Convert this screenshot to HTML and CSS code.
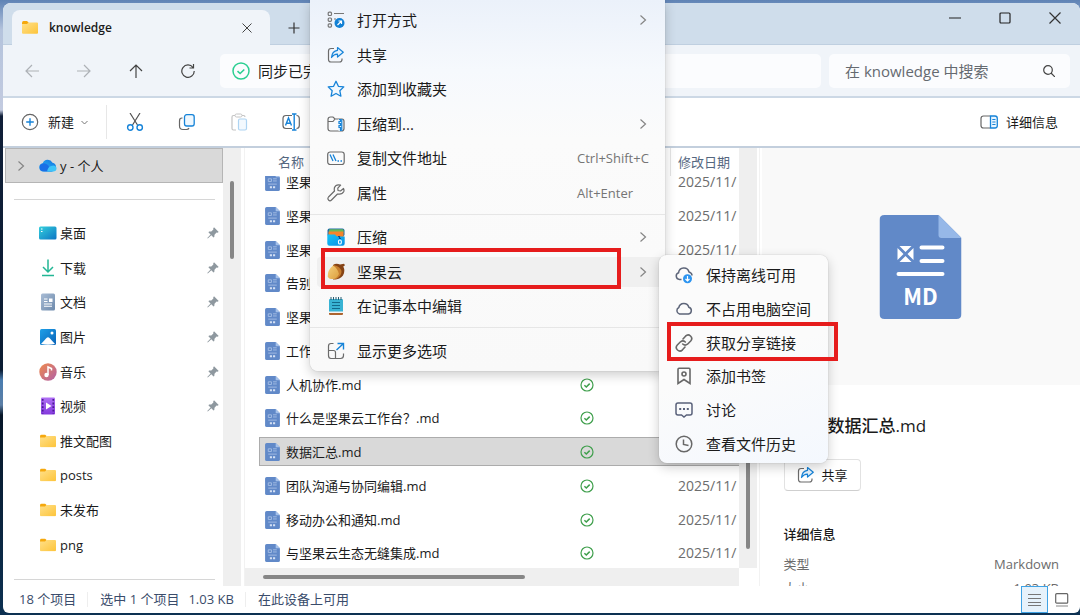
FILE: index.html
```html
<!DOCTYPE html>
<html lang="zh-CN">
<head>
<meta charset="utf-8">
<meta name="viewport" content="width=device-width, initial-scale=1">
<title>knowledge</title>
<link rel="stylesheet" href="styles.css">
</head>
<body>
<svg class="defs" aria-hidden="true">
  <defs>
    <linearGradient id="g-folder" x1="0" y1="0" x2="1" y2="1"><stop offset="0" stop-color="#ffe08a"/><stop offset="1" stop-color="#fdc43a"/></linearGradient>
    <linearGradient id="g-desk" x1="0" y1="0" x2="1" y2="1"><stop offset="0" stop-color="#35d0dc"/><stop offset="1" stop-color="#0b74c4"/></linearGradient>
    <linearGradient id="g-doc" x1="0" y1="0" x2="1" y2="1"><stop offset="0" stop-color="#a9bdd6"/><stop offset="1" stop-color="#6d89ab"/></linearGradient>
    <linearGradient id="g-pic" x1="0" y1="0" x2="1" y2="1"><stop offset="0" stop-color="#1ea0e8"/><stop offset="1" stop-color="#0a63b8"/></linearGradient>
    <linearGradient id="g-music" x1="0" y1="0" x2="1" y2="1"><stop offset="0" stop-color="#f08a4b"/><stop offset="1" stop-color="#b160a8"/></linearGradient>
    <linearGradient id="g-video" x1="0" y1="0" x2="0" y2="1"><stop offset="0" stop-color="#b070f5"/><stop offset="1" stop-color="#8339dd"/></linearGradient>
    <linearGradient id="g-cloud" x1="0" y1="1" x2="1" y2="0"><stop offset="0" stop-color="#35c3f7"/><stop offset="1" stop-color="#0f6fe0"/></linearGradient>
    <linearGradient id="g-zip" x1="0" y1="0" x2="1" y2="1"><stop offset="0" stop-color="#12c3f5"/><stop offset="1" stop-color="#0a8fe6"/></linearGradient>
    <linearGradient id="g-nut" x1="0" y1="0" x2="1" y2="1"><stop offset="0" stop-color="#f6d07c"/><stop offset="1" stop-color="#dc9f3e"/></linearGradient>
  </defs>
  <symbol id="folder" viewBox="0 0 16 13"><path d="M0 2Q0 0 1.500 0H5L6.500 1.500V4H0Z" fill="#f5a80d"/><path d="M0 3H5L6.500 1.500H15Q16 1.500 16 2.500V11.500Q16 12.700 15 12.700H1Q0 12.700 0 11.500Z" fill="url(#g-folder)"/></symbol>
  <symbol id="pin" viewBox="0 0 12 12"><path d="M7 .3 11.700 5 10.500 5.700 9.500 5.500 7.500 7.800 7.300 10 6.500 10.500 4.300 8.300.8 11.600.3 11.100 3.600 7.600 1.500 5.400 2 4.600 4.300 4.400 6.400 2.500 6.200 1.400Z" fill="#8e989f"/></symbol>
  <symbol id="md" viewBox="0 0 82 104"><path d="M5 0H59L82 23V99Q82 104 77 104H5Q0 104 0 99V5Q0 0 5 0Z" fill="#6189c8"/><path d="M59 0 82 23H62Q59 23 59 20Z" fill="#96b8e8"/><path d="M20 31H32L26 37ZM20 47H32L26 41ZM18 33V45L24 39ZM34 33V45L28 39Z" fill="#fff"/><path d="M42 32.500H63M42 46H63M19 59H63" stroke="#fff" stroke-width="4" stroke-linecap="round"/><text x="41" y="90" text-anchor="middle" class="md-word">MD</text></symbol>
  <symbol id="md-small" viewBox="0 0 14 17"><path d="M1.500 0H10L14 4V15.500Q14 17 12.500 17H1.500Q0 17 0 15.500V1.500Q0 0 1.500 0Z" fill="#6189c8"/><path d="M10 0 14 4H10Z" fill="#a6c2ea"/><path d="M3 5.500H6V8H3ZM7.500 5.500H11M7.500 7.500H11M3 10.500H11" stroke="#a3bde4" stroke-width=".9" fill="none"/><path d="M4.500 12.500H6.500V14.500H4.500ZM7.500 12.500H9.500V14.500H7.500Z" fill="#d5e1f4"/></symbol>
  <symbol id="ok" viewBox="0 0 14 14"><g fill="none" stroke="#3f9f4c" stroke-width="1.200"><circle cx="7" cy="7" r="6"/><path d="m4.400 7.200 1.900 1.800 3.400-3.400" stroke-width="1.500"/></g></symbol>
  <symbol id="chev" viewBox="0 0 8 12"><path d="m1.500 1.500 5 4.500-5 4.500" fill="none" stroke="#858585" stroke-width="1.200"/></symbol>
  <symbol id="share" viewBox="0 0 18 18"><path d="M7 2.500H4Q1.500 2.500 1.500 5V13.500Q1.500 16 4 16H12.500Q15 16 15 13.500V12.500" fill="none" stroke="#6b6b6b" stroke-width="1.200"/><path d="M10.500 1.500 16.300 6.200 10.500 11V8.200Q7 8 4.500 11.500 5 5 10.500 4.300Z" fill="#e6f3fd" stroke="#1683d8" stroke-width="1.200" stroke-linejoin="round"/></symbol>
</svg>

<div class="window">
  <header class="titlebar">
    <div class="tab">
      <svg class="i16" viewBox="0 0 16 13"><use href="#folder"/></svg>
      <span class="tab-name">knowledge</span>
      <button class="plain" aria-label="关闭标签页"><svg width="12" height="12" viewBox="0 0 12 12"><path d="m1.500 1.500 9 9M10.500 1.500l-9 9" stroke="#444"/></svg></button>
    </div>
    <button class="plain new-tab" aria-label="新标签页"><svg width="12" height="12" viewBox="0 0 12 12"><path d="M6 .5V11.500M.5 6H11.500" stroke="#333" stroke-width="1.200"/></svg></button>
    <div class="caption">
      <button class="plain" aria-label="最小化"><svg width="12" height="12" viewBox="0 0 12 12"><path d="M0 6H12" stroke="#222" stroke-width="1.200"/></svg></button>
      <button class="plain" aria-label="最大化"><svg width="12" height="12" viewBox="0 0 12 12"><rect x="1" y="1" width="10" height="10" rx="1" fill="none" stroke="#222" stroke-width="1.200"/></svg></button>
      <button class="plain" aria-label="关闭"><svg width="12" height="12" viewBox="0 0 12 12"><path d="m.5.5 11 11M11.500.5l-11 11" stroke="#333" stroke-width="1.200"/></svg></button>
    </div>
  </header>

  <nav class="navbar">
    <button class="plain" aria-label="后退"><svg width="14" height="14" viewBox="0 0 14 14"><path d="M14 7H1M7 1 1 7l6 6" fill="none" stroke="#adb1b6" stroke-width="1.200"/></svg></button>
    <button class="plain" aria-label="前进"><svg width="14" height="14" viewBox="0 0 14 14"><path d="M0 7H13M7 1l6 6-6 6" fill="none" stroke="#adb1b6" stroke-width="1.200"/></svg></button>
    <button class="plain" aria-label="向上"><svg width="14" height="14" viewBox="0 0 14 14"><path d="M7 14V1M1 7 7 1l6 6" fill="none" stroke="#444" stroke-width="1.200"/></svg></button>
    <button class="plain" aria-label="刷新"><svg width="14" height="14" viewBox="0 0 14 14"><path d="M12 3.500A6.200 6.200 0 1 0 13.200 7M12.500 0V4H8.500" fill="none" stroke="#444" stroke-width="1.200"/></svg></button>
    <div class="address">
      <svg width="18" height="18" viewBox="0 0 18 18"><g fill="none" stroke="#2bcf92"><circle cx="9" cy="9" r="8" stroke-width="1.500"/><path d="m5.500 9.200 2.600 2.300 4.200-4" stroke-width="1.600"/></g></svg>
      <span>同步已完成</span>
    </div>
    <label class="search">
      <input type="text" placeholder="在 knowledge 中搜索" aria-label="在 knowledge 中搜索">
      <svg width="12" height="12" viewBox="0 0 12 12"><g fill="none" stroke="#444" stroke-width="1.200"><circle cx="5" cy="5" r="4.300"/><path d="m8 8 4 4"/></g></svg>
    </label>
  </nav>

  <div class="toolbar">
    <button class="plain new">
      <svg width="18" height="18" viewBox="0 0 18 18"><circle cx="9" cy="9" r="7.700" fill="none" stroke="#666" stroke-width="1.200"/><path d="M9 5.200v7.600M5.200 9h7.600" stroke="#1683d8" stroke-width="1.400"/></svg>
      <span>新建</span>
      <svg width="7" height="5" viewBox="0 0 7 5"><path d="m.5 1 3 3 3-3" fill="none" stroke="#777"/></svg>
    </button>
    <span class="bar-line"></span>
    <button class="plain tool" aria-label="剪切"><svg width="18" height="18" viewBox="0 0 18 18"><path d="m4 0 7.500 12M14 0 6.500 12" stroke="#555" stroke-width="1.200"/><g fill="none" stroke="#1683d8" stroke-width="1.400"><circle cx="4.300" cy="14.500" r="2.700"/><circle cx="13.700" cy="14.500" r="2.700"/></g></svg></button>
    <button class="plain tool" aria-label="复制"><svg width="18" height="18" viewBox="0 0 18 18"><path d="M4.500 5H4Q1.500 5 1.500 8V13Q1.500 16.500 5 16.500H8.500Q10.500 16.500 11 15" fill="none" stroke="#666" stroke-width="1.200"/><rect x="6.500" y="1.700" width="9.700" height="11.300" rx="2.200" fill="#eef7fe" stroke="#1683d8" stroke-width="1.300"/></svg></button>
    <button class="plain tool" aria-label="粘贴"><svg width="18" height="18" viewBox="0 0 18 18"><path d="M6 17H3.500Q2 17 2 15.500V4Q2 2.500 3.500 2.500H5M12 2.500h1.500Q15 2.500 15 4" fill="none" stroke="#c4c4c4" stroke-width="1.200"/><rect x="5" y="1" width="7" height="3" rx="1.500" fill="#fff" stroke="#c4c4c4"/><rect x="8.500" y="6" width="8" height="11" rx="1.500" fill="#f3f9fe" stroke="#aed4f2" stroke-width="1.200"/></svg></button>
    <button class="plain tool" aria-label="重命名"><svg width="18" height="18" viewBox="0 0 18 18"><path d="M10 2.500H4Q1 2.500 1 5.500V12.500Q1 15.500 4 15.500H10M14.500 2.500Q17.300 2.500 17.300 5.500V12.500Q17.300 15.500 14.500 15.500" fill="none" stroke="#666" stroke-width="1.200"/><path d="M10 1h4.500M10 17h4.500M12.200 1V17" stroke="#1683d8" stroke-width="1.400"/><path d="M3.500 12.500 6.500 5l3 7.500M4.500 10.200h4" fill="none" stroke="#1683d8" stroke-width="1.400"/></svg></button>
    <button class="plain details-toggle">
      <svg width="18" height="14" viewBox="0 0 18 14"><path d="M10 1H3.500Q1 1 1 3.500V10.500Q1 13 3.500 13H10" fill="none" stroke="#666" stroke-width="1.200"/><path d="M10.500 1H15Q17.300 1 17.300 3.500V10.500Q17.300 13 15 13H10.500Z" fill="#e9f5fe" stroke="#1683d8" stroke-width="1.300"/><path d="M12.300 4.500h3.200M12.300 7h3.200M12.300 9.500h3.200" stroke="#1683d8"/></svg>
      <span>详细信息</span>
    </button>
  </div>

  <main class="content">
    <aside class="sidebar">
      <a class="account" href="#">
        <svg width="8" height="12" viewBox="0 0 8 12"><use href="#chev"/></svg>
        <svg class="cloud" width="18" height="13" viewBox="0 0 18 13"><path d="M4.500 12.500A4.200 4.200 0 0 1 3.700 4.200 5.400 5.400 0 0 1 13.500 3.700 4.500 4.500 0 0 1 13.500 12.500Z" fill="url(#g-cloud)"/><path d="M1 6Q5 2.500 9 6L13 12.500H5Q-1 12 1 6Z" fill="#1a6fe6"/><path d="M8 12.500Q9 6.500 14.500 6.500 18 7 17.500 10 17 12.500 14 12.500Z" fill="#3fc4f8"/></svg>
        <span>y - 个人</span>
      </a>
      <div class="places">
        <a href="#"><svg class="i18" viewBox="0 0 18 14"><rect y=".5" width="17.500" height="13" rx="1.500" fill="url(#g-desk)"/><path d="M2 3h1.500M2 5.500h1.500" stroke="#fff" stroke-width="1.200"/></svg><span>桌面</span><svg class="pin"><use href="#pin"/></svg></a>
        <a href="#"><svg class="i18" viewBox="0 0 18 17"><path d="M9 0V12M4 7.500l5 5 5-5M3 16H15" fill="none" stroke="#23b695" stroke-width="1.500"/></svg><span>下载</span><svg class="pin"><use href="#pin"/></svg></a>
        <a href="#"><svg class="i18" viewBox="0 0 18 18"><rect x="2" y=".5" width="14" height="17" rx="1.500" fill="url(#g-doc)"/><path d="M5 6h3.500M5 8.500h3.500M5 11h8M5 13.200h8" stroke="#fff" stroke-width="1.100"/><path d="M10 5.500h3.500V9H10Z" fill="#fff"/></svg><span>文档</span><svg class="pin"><use href="#pin"/></svg></a>
        <a href="#"><svg class="i18" viewBox="0 0 18 17"><rect x="1" y=".5" width="16" height="16" rx="1.500" fill="url(#g-pic)"/><path d="m2 15.500 5.500-6Q9 8 10.500 9.500L16 15.500Q9 17 2 15.500Z" fill="#fff"/><circle cx="13" cy="4.500" r="1.500" fill="#fff"/></svg><span>图片</span><svg class="pin"><use href="#pin"/></svg></a>
        <a href="#"><svg class="i18" viewBox="0 0 18 18"><circle cx="9" cy="9" r="8.700" fill="url(#g-music)"/><circle cx="7.500" cy="12" r="2.200" fill="#fff"/><path d="M9 12V4L12.500 5.500V7.500" fill="none" stroke="#fff" stroke-width="1.500"/></svg><span>音乐</span><svg class="pin"><use href="#pin"/></svg></a>
        <a href="#"><svg class="i18" viewBox="0 0 18 18"><rect x="2" y=".5" width="14" height="17" rx="1" fill="url(#g-video)"/><path d="M3.700 2V17M14.300 2V17" stroke="#4a1a91" stroke-width="1.700" stroke-dasharray="1.800 1.800"/><path d="m7 5.500 5.500 3.500L7 12.500Z" fill="#fff"/></svg><span>视频</span><svg class="pin"><use href="#pin"/></svg></a>
        <a href="#"><svg class="i18" viewBox="-1 0 18 13"><use href="#folder" width="16" height="13"/></svg><span>推文配图</span></a>
        <a href="#"><svg class="i18" viewBox="-1 0 18 13"><use href="#folder" width="16" height="13"/></svg><span>posts</span></a>
        <a href="#"><svg class="i18" viewBox="-1 0 18 13"><use href="#folder" width="16" height="13"/></svg><span>未发布</span></a>
        <a href="#"><svg class="i18" viewBox="-1 0 18 13"><use href="#folder" width="16" height="13"/></svg><span>png</span></a>
      </div>
    </aside>
    <div class="vscroll side-scroll"><span></span></div>

    <section class="files">
      <table>
        <thead><tr><th>名称</th><th></th><th>修改日期</th></tr></thead>
        <tbody>
          <tr><td><svg class="file"><use href="#md-small"/></svg>坚果云.md</td><td><svg class="ok"><use href="#ok"/></svg></td><td>2025/11/</td></tr>
          <tr><td><svg class="file"><use href="#md-small"/></svg>坚果云.md</td><td><svg class="ok"><use href="#ok"/></svg></td><td>2025/11/</td></tr>
          <tr><td><svg class="file"><use href="#md-small"/></svg>坚果云.md</td><td><svg class="ok"><use href="#ok"/></svg></td><td>2025/11/</td></tr>
          <tr><td><svg class="file"><use href="#md-small"/></svg>告别.md</td><td><svg class="ok"><use href="#ok"/></svg></td><td>2025/11/</td></tr>
          <tr><td><svg class="file"><use href="#md-small"/></svg>坚果云.md</td><td><svg class="ok"><use href="#ok"/></svg></td><td>2025/11/</td></tr>
          <tr><td><svg class="file"><use href="#md-small"/></svg>工作.md</td><td><svg class="ok"><use href="#ok"/></svg></td><td>2025/11/</td></tr>
          <tr><td><svg class="file"><use href="#md-small"/></svg>人机协作.md</td><td><svg class="ok"><use href="#ok"/></svg></td><td>2025/11/</td></tr>
          <tr><td><svg class="file"><use href="#md-small"/></svg>什么是坚果云工作台？.md</td><td><svg class="ok"><use href="#ok"/></svg></td><td>2025/11/</td></tr>
          <tr class="selected"><td><svg class="file"><use href="#md-small"/></svg>数据汇总.md</td><td><svg class="ok"><use href="#ok"/></svg></td><td>2025/11/</td></tr>
          <tr><td><svg class="file"><use href="#md-small"/></svg>团队沟通与协同编辑.md</td><td><svg class="ok"><use href="#ok"/></svg></td><td>2025/11/</td></tr>
          <tr><td><svg class="file"><use href="#md-small"/></svg>移动办公和通知.md</td><td><svg class="ok"><use href="#ok"/></svg></td><td>2025/11/</td></tr>
          <tr><td><svg class="file"><use href="#md-small"/></svg>与坚果云生态无缝集成.md</td><td><svg class="ok"><use href="#ok"/></svg></td><td>2025/11/</td></tr>
        </tbody>
      </table>
      <div class="hscroll"><span></span></div>
    </section>
    <div class="vscroll list-scroll"><span></span></div>

    <aside class="preview">
      <div class="thumb"><svg width="83" height="104" viewBox="0 0 82 104"><use href="#md"/></svg></div>
      <div class="info">
        <h2><svg width="28" height="34" viewBox="0 0 14 17"><use href="#md-small"/></svg>数据汇总.md</h2>
        <button class="share"><svg width="18" height="18" viewBox="0 0 18 18"><use href="#share"/></svg>共享</button>
        <h3>详细信息</h3>
        <dl><dt>类型</dt><dd>Markdown</dd><dt>大小</dt><dd>1.03 KB</dd></dl>
      </div>
    </aside>
  </main>

  <footer class="status">
    <span>18 个项目</span>
    <span class="picked"><span>选中 1 个项目</span><span>1.03 KB</span></span>
    <span>在此设备上可用</span>
    <div class="views">
      <button class="plain on" aria-label="详细信息视图"><svg width="14" height="14" viewBox="0 0 14 14"><path d="M0 1.500h13M0 5.500h13M0 9.500h13M0 12.500h13" stroke="#777"/></svg></button>
      <button class="plain" aria-label="大图标视图"><svg width="14" height="14" viewBox="0 0 14 14"><rect x=".7" y=".7" width="12" height="9.500" rx="1" fill="none" stroke="#666" stroke-width="1.200"/><path d="M1 13h12" stroke="#888" stroke-width="1.200"/></svg></button>
    </div>
  </footer>
</div>

<div class="menu context" role="menu">
  <div class="group first">
    <button role="menuitem"><svg class="i18" viewBox="0 0 18 18"><g fill="none" stroke="#777" stroke-width="1.200"><rect x="1.200" y="1.200" width="3.300" height="3.300" rx="1"/><rect x="1.200" y="7" width="3.300" height="3.300" rx="1"/><rect x="1.200" y="12.800" width="3.300" height="3.300" rx="1"/><path d="M7 2.500h10M7 8h2"/></g><circle cx="12.500" cy="12" r="5" fill="#1280d4"/><path d="m10.500 14 4-4M11.500 10h3v3" fill="none" stroke="#fff" stroke-width="1.200"/></svg><span>打开方式</span><svg class="chev"><use href="#chev"/></svg></button>
    <button role="menuitem"><svg class="i18" viewBox="0 0 18 18"><use href="#share"/></svg><span>共享</span></button>
    <button role="menuitem"><svg class="i18" viewBox="0 0 18 18"><path d="m9 1.300 2.400 5 5.400.6-4 3.800 1.100 5.500L9 13.500l-4.900 2.700 1.100-5.500-4-3.800 5.400-.6Z" fill="#f1f8fe" stroke="#1683d8" stroke-width="1.300" stroke-linejoin="round"/></svg><span>添加到收藏夹</span></button>
    <button role="menuitem"><svg class="i18" viewBox="0 0 18 18"><path d="M1 4.500Q1 2 3.500 2H6L8 4H15Q17 4 17 6.500V13.500Q17 16 14.500 16H3.500Q1 16 1 13.500ZM1 6.500H6L8 4" fill="none" stroke="#6b6b6b" stroke-width="1.200"/><path d="M11.500 4V16H15V4" fill="#e6f3fd"/><path d="M12 4.500h1.500v2H12v2h1.500v2H12v2h1.500V16M14.800 4V16" fill="none" stroke="#1683d8" stroke-width="1.200"/></svg><span>压缩到...</span><svg class="chev"><use href="#chev"/></svg></button>
    <button role="menuitem"><svg class="i18" viewBox="0 0 18 18"><rect x=".7" y="3" width="16.500" height="12.500" rx="2.500" fill="none" stroke="#6b6b6b" stroke-width="1.200"/><path d="m3 5.500 3 6.500M6 5.500l3 6.500M10.500 12H12M13.500 12H15" stroke="#1683d8" stroke-width="1.300"/></svg><span>复制文件地址</span><kbd>Ctrl+Shift+C</kbd></button>
    <button role="menuitem"><svg class="i18" viewBox="0 0 18 18"><path d="M16.500 4.500 13.500 7 11 6.500 10.800 4.200 13.600 1.200Q9 0 7.500 3.500 7 5.500 7.500 7L1.500 13Q.3 14.500 1.500 16 3 17.500 4.500 16L10.500 10Q15 11 16.800 7.500 17.300 6 16.500 4.500Z" fill="none" stroke="#6b6b6b" stroke-width="1.200" stroke-linejoin="round"/></svg><span>属性</span><kbd>Alt+Enter</kbd></button>
  </div>
  <div class="group second">
    <button role="menuitem"><svg class="i18" viewBox="0 0 18 18"><rect x=".5" y=".5" width="17" height="8" rx="2" fill="#1f6aa8"/><rect x="2" y="1.200" width="14.500" height="4" rx="1" fill="#64b95b"/><path d="M1.500 3.500H16.500V9H1.500Z" fill="#f5842a"/><path d="M.3 6.500H8Q9 8.500 11 8.500H17.700V15.500Q17.700 17.700 15.500 17.700H2.500Q.3 17.700.3 15.500Z" fill="url(#g-zip)"/><path d="M11 8.500h1.500v2H14" fill="none" stroke="#0a4e91" stroke-width="1.200"/><rect x="11.500" y="12" width="2.800" height="4" rx="1.300" fill="none" stroke="#fff" stroke-width="1.100"/></svg><span>压缩</span><svg class="chev"><use href="#chev"/></svg></button>
    <button role="menuitem" class="hover"><svg class="i18" viewBox="0 0 18 18"><path d="M6 2Q9 0 13 1.500L17 .8 18 2.200 16.300 3.500Q18.500 8 16 12.500 12.500 17 6 16.500Z" fill="#854315"/><path d="M6.500 2Q14 3.500 14.500 9 14 14 8.500 16.500L5 10Z" fill="#c67d2d"/><path d="M6 2.500Q10.500 5 12 11 10.500 14.500 7.500 16 1.500 16.500.7 13.500.5 7 6 2.500Z" fill="url(#g-nut)"/></svg><span>坚果云</span><svg class="chev"><use href="#chev"/></svg></button>
    <button role="menuitem"><svg class="i18" viewBox="0 0 18 18"><rect x="2" y="14" width="14" height="4" rx="1" fill="#ad642f"/><rect x="2" y="2" width="14" height="13.500" rx="1" fill="#38b3d4"/><path d="M2 14.500h14V16H2Z" fill="#f3f4f5"/><path d="M5 5.500h8M5 8.500h8M5 11.500h8" stroke="#13698b" stroke-width="1.200"/><path d="M4 0V3M6.500 0V3M9 0V3M11.500 0V3M14 0V3" stroke="#275d72"/></svg><span>在记事本中编辑</span></button>
    <div class="mark nut"></div>
  </div>
  <div class="group third">
    <button role="menuitem"><svg class="i18" viewBox="0 0 18 18"><path d="M6.500 1.500H4Q1.500 1.500 1.500 4V13.500Q1.500 16.500 4 16.500H13.500Q16.500 16.500 16.500 13.500V11.500M1.500 8.500H6.500Q8.500 8.500 8.500 10.500V16.500" fill="none" stroke="#6b6b6b" stroke-width="1.200"/><path d="m9.500 8 7-6.500M10.500 1.500h6v6" fill="none" stroke="#1683d8" stroke-width="1.400"/></svg><span>显示更多选项</span></button>
  </div>
</div>

<div class="menu submenu" role="menu">
  <button role="menuitem"><svg class="i18" viewBox="0 0 18 18"><path d="M6.500 13.500H4.500A3.500 3.500 0 0 1 3.600 6.700 5.300 5.300 0 0 1 14 6Q17 7 17 9.500" fill="none" stroke="#5d6579" stroke-width="1.500"/><circle cx="12.500" cy="12.700" r="4.500" fill="#2c94f0"/><path d="M12.500 10v5M10.500 13l2 2 2-2" fill="none" stroke="#fff" stroke-width="1.200"/></svg><span>保持离线可用</span></button>
  <button role="menuitem"><svg class="i18" viewBox="0 0 18 18"><path d="M4.500 14A3.500 3.500 0 0 1 3.800 7.500 5.200 5.200 0 0 1 13.800 7.200 3.500 3.500 0 0 1 13.500 14Z" fill="none" stroke="#5d6579" stroke-width="1.500"/></svg><span>不占用电脑空间</span></button>
  <button role="menuitem"><svg class="i18" viewBox="0 0 18 18"><g fill="none" stroke="#686868" stroke-width="1.600" stroke-linecap="round"><path d="m8 5 2.500-2.800Q13-.2 15.500 2 18 4.500 15.700 7L12.500 10.200Q10 12 7.700 10"/><path d="m10 13-2.500 2.800Q5 18.200 2.500 16 0 13.500 2.300 11L5.500 7.800Q8 6 10.300 8"/></g></svg><span>获取分享链接</span></button>
  <button role="menuitem"><svg class="i18" viewBox="0 0 18 18"><path d="M3 16.500V2.500Q3 1.300 4 1.300H14Q15 1.300 15 2.500V16.500L9 12.500Z" fill="none" stroke="#686868" stroke-width="1.600"/><circle cx="9" cy="7" r="2" fill="none" stroke="#686868" stroke-width="1.600"/></svg><span>添加书签</span></button>
  <button role="menuitem"><svg class="i18" viewBox="0 0 18 18"><path d="M3 2H15Q17 2 17 4V12Q17 14 15 14H11.500L9 16 6.500 14H3Q1 14 1 12V4Q1 2 3 2Z" fill="none" stroke="#59617a" stroke-width="1.500"/><path d="M4.200 8h2M8 8h2M11.800 8h2" stroke="#59617a" stroke-width="2"/></svg><span>讨论</span></button>
  <button role="menuitem"><svg class="i18" viewBox="0 0 18 18"><circle cx="9" cy="9" r="7.800" fill="none" stroke="#686868" stroke-width="1.500"/><path d="M8.500 4.500V9.500L13.500 10.500" fill="none" stroke="#686868" stroke-width="1.500"/></svg><span>查看文件历史</span></button>
  <div class="mark link"></div>
</div>
</body>
</html>
```
FILE: styles.css
```css
* { box-sizing: border-box; }

body {
  margin: 0;
  height: 100vh;
  overflow: hidden;
  position: relative;
  padding: 3px 0 2px 3px;
  font: 13px/20px "Open Sans", "Noto Sans CJK SC", sans-serif;
  color: #1b1b1b;
  background: linear-gradient(#5f83b5 0, #b4c3dc 30px, #c3cbe0 110px, #101f38 116px, #0a1c33 370px, #4a7db0 380px, #5c7fa6 405px, #071628 415px, #0d3152 100%);
}

button { font: inherit; color: inherit; }
a { color: inherit; text-decoration: none; }
.defs { position: absolute; width: 0; height: 0; }
.md-word { font: bold 22px "Noto Sans CJK SC", sans-serif; fill: #fff; }
.i16 { width: 16px; height: 13px; }
.i18 { width: 18px; height: 18px; flex: none; }
.plain { display: flex; align-items: center; justify-content: center; border: 0; padding: 0; background: none; }

.window {
  height: 100%;
  display: flex;
  flex-direction: column;
  background: #fff;
  border-radius: 8px 8px 6px 6px;
  overflow: hidden;
}

/* title bar */
.titlebar {
  flex: none;
  height: 42px;
  display: flex;
  align-items: flex-end;
  background: #cfddeb;
  border-bottom: 1px solid #bfcfe0;
}
.tab {
  width: 258px;
  height: 35px;
  margin: 0 0 -1px 9px;
  padding: 0 17px 0 10px;
  display: flex;
  align-items: center;
  background: #f0f4f9;
  border-radius: 8px 8px 0 0;
}
.tab-name { flex: 1; margin-left: 11px; font-weight: 600; font-size: 12px; }
.new-tab { width: 48px; height: 32px; }
.caption { margin-left: auto; align-self: flex-start; display: flex; }
.caption button { width: 50px; height: 30px; }

/* navigation */
.navbar {
  flex: none;
  height: 53px;
  padding: 0 10px 0 3px;
  display: flex;
  align-items: center;
  background: #f0f4f9;
  border-bottom: 2px solid #ccd8e5;
}
.navbar > .plain { width: 52px; height: 34px; }
.address, .search {
  height: 34px;
  display: flex;
  align-items: center;
  border-radius: 5px;
  background: #fbfcfe;
  font-size: 15px;
}
.address { flex: 589 1 0; margin-left: 6px; padding-left: 12px; gap: 8px; }
.search { flex: 210 1 0; margin-left: 8px; padding: 0 15px 0 16px; }
.search input {
  flex: 1;
  min-width: 0;
  border: 0;
  padding: 0;
  outline: 0;
  background: none;
  font: 15px/20px "Open Sans", "Noto Sans CJK SC", sans-serif;
}
.search input::placeholder { color: #656a70; opacity: 1; }

/* commands */
.toolbar {
  flex: none;
  height: 50px;
  padding: 0 22px 0 18px;
  display: flex;
  align-items: center;
  border-bottom: 2px solid #c3cfdd;
}
.new span { margin: 0 7px 0 9px; }
.bar-line { width: 1px; height: 34px; margin: 0 2px 0 18px; background: #e7e7e7; }
.tool { width: 52px; height: 34px; }
.details-toggle { margin-left: auto; gap: 8px; }

/* three panes */
.content { flex: 1; min-height: 0; display: flex; }
.sidebar { flex: none; width: 220px; padding-left: 2px; display: flex; flex-direction: column; }
.account {
  height: 35px;
  display: flex;
  align-items: center;
  padding-left: 11px;
  border: 1px solid #b5b5b5;
  background: #d9d9d9;
}
.cloud { margin: 0 3px 0 14px; }
.places {
  flex: 1;
  display: grid;
  grid-auto-rows: 1fr;
  margin: 16px 8px 6px 9px;
  padding: 16px 0 17px;
  border: solid #d6d6d6;
  border-width: 1px 0;
}
.places a { display: flex; align-items: center; padding-left: 25px; gap: 3px; min-height: 0; }
.places .pin { width: 12px; height: 12px; margin: 0 -4px 0 auto; }
.vscroll { flex: none; width: 18px; background: #efefef; }
.vscroll span { display: block; width: 4px; border-radius: 2px; background: #868686; margin-left: 7px; }
.side-scroll span { height: 78px; margin-top: 33px; }
.list-scroll { margin-bottom: 18px; display: flex; flex-direction: column; }
.list-scroll span { margin: auto 0 19px 7px; height: 150px; }

/* file list */
.files {
  flex: 493 1 0;
  min-width: 0;
  margin-left: 3px;
  border-left: 1px solid #f2f2f2;
  display: flex;
  flex-direction: column;
}
.files table { flex: 1; min-height: 0; display: flex; flex-direction: column; }
.files thead { display: block; }
.files tr { display: grid; grid-template-columns: 316px 94px 1fr; margin: 2px 0 3px 15px; align-items: center; }
.files thead tr { height: 28px; margin: 0 0 0 15px; color: #55677f; }
.files th { padding: 0; font-weight: 400; text-align: left; }
.files th:first-child { padding-left: 18px; }
.files th:last-child { height: 28px; padding: 4px 0 0 7px; border-left: 1px solid #e5e5e5; }
.files tbody {
  flex: 1;
  min-height: 0;
  display: grid;
  grid-template-rows: repeat(3, 34px 34px 34px 33px);
  align-content: end;
  overflow: hidden;
  margin-bottom: -2px;
}
.files td { padding: 0; display: flex; align-items: center; white-space: nowrap; overflow: hidden; }
.files td:first-child { padding-left: 5px; gap: 6px; }
.files td:last-child { padding-left: 8px; font-size: 14px; color: #6d6d6d; }
.files .file { width: 15px; height: 18px; flex: none; }
.files .ok { width: 14px; height: 14px; margin-left: 4px; }
.files tr.selected { background: #d9d9d9; border: 1px solid #acacac; border-right: 0; margin-left: 14px; }
.hscroll { flex: none; height: 18px; padding: 7px 0 0 18px; background: #efefef; }
.hscroll span { display: block; width: 55%; height: 4px; border-radius: 2px; background: #868686; }

/* preview */
.preview { flex: 320 1 0; min-width: 0; margin-left: 2px; display: flex; flex-direction: column; border-left: 1px solid #f2f2f2; }
.thumb { flex: none; height: 237px; margin-left: 2px; display: grid; place-items: center; background: #f9f9f9; }
.info { flex: 1; min-height: 0; overflow: hidden; padding: 24px 21px 0 24px; }
.info h2 { display: flex; align-items: center; gap: 16px; height: 34px; margin: 0; font-size: 17px; font-weight: 500; }
.share {
  display: flex;
  align-items: center;
  gap: 7px;
  height: 32px;
  margin: 16px 0 33px;
  padding: 0 12px;
  border: 1px solid #e2e2e2;
  border-bottom-color: #cfcfcf;
  border-radius: 4px;
  background: #fff;
}
.info h3 { margin: 0 0 10px; font-size: 13px; font-weight: 500; }
.info dl { display: grid; grid-template-columns: 1fr auto; row-gap: 4px; margin: 0; color: #6b6b6b; }
.info dd { margin: 0; text-align: right; }

/* status */
.status { flex: none; height: 27px; display: flex; align-items: stretch; padding: 0 5px 0 16px; line-height: 27px; color: #3a4c6b; }
.status > span + span { margin-left: 12px; position: relative; }
.status > span { background: linear-gradient(#eee, #eee) right center / 1px 15px no-repeat; padding-right: 12px; }
.status > span:last-of-type { background: none; }
.picked { display: flex; gap: 9px; }
.views { margin-left: auto; display: flex; }
.views button { width: 27px; border: 1px solid transparent; }
.views .on { border-color: #3ea2e4; background: #e6f2fb; }

/* menus */
.menu {
  position: absolute;
  background: linear-gradient(#ebf1fa 0, #f6f9fd 70px, #fbfbfb 140px, #f9f9f9 100%);
  box-shadow: 0 4px 12px rgba(0, 0, 0, .2), 0 0 1px rgba(0, 0, 0, .35);
}
.menu button {
  display: flex;
  align-items: center;
  padding: 0;
  border: 0;
  background: none;
  font-size: 15px;
  text-align: left;
}
.menu .chev { width: 8px; height: 12px; margin: 0 16px 0 auto; }
.menu kbd { width: 86px; margin-left: auto; font: 13px/20px "Open Sans", sans-serif; color: #757575; }
.context { left: 310px; top: 0; width: 355px; padding: 3px 0; border-radius: 0 0 8px 8px; }
.context button { margin: 0 2px 0 7px; padding-left: 10px; gap: 12px; }
.group { display: grid; position: relative; }
.first { grid-template-rows: repeat(3, 34px 35px); }
.second { grid-template-rows: 34px 35px 34px; margin: 4px 0; padding: 5px 0 4px; border: solid #e6e6e6; border-width: 1px 0; }
.third { grid-template-rows: 35px; padding-top: 1px; }
.context .hover { margin-top: 3px; margin-bottom: 2px; border-radius: 4px; background: #f0f0f0; }
.submenu {
  left: 659px;
  top: 255px;
  width: 169px;
  padding: 3px 0 2px;
  display: grid;
  grid-template-rows: 34px 34px 33px 34px 34px 34px;
  border-radius: 8px;
  background: linear-gradient(160deg, #fbfbfb 50%, #f4f8fe);
}
.submenu button { padding-left: 16px; gap: 13px; }
.mark { position: absolute; border: 4px solid #e61c1c; }
.nut { left: 11px; top: 33px; width: 300px; height: 41px; }
.link { left: 8px; top: 67px; width: 171px; height: 39px; }
```
